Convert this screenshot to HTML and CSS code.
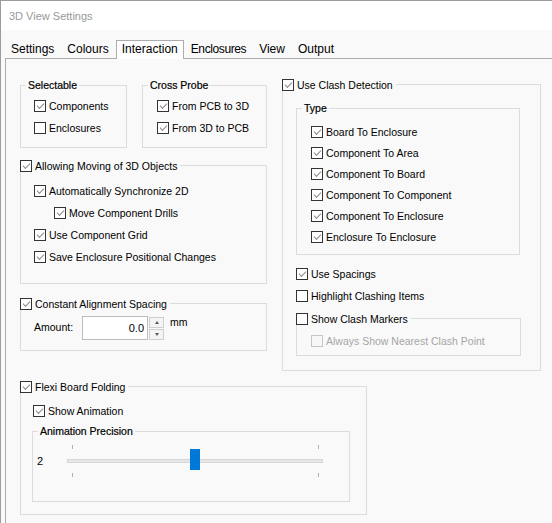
FILE: index.html
```html
<!DOCTYPE html>
<html>
<head>
<meta charset="utf-8">
<link rel="stylesheet" href="styles.css">
</head>
<body>
<div class="window">
  <div class="titlebar"><span class="title">3D View Settings</span></div>
  <div class="tabstrip">
    <div class="tab">Settings</div>
    <div class="tab">Colours</div>
    <div class="tab active">Interaction</div>
    <div class="tab narrow">Enclosures</div>
    <div class="tab">View</div>
    <div class="tab">Output</div>
  </div>
  <div class="panel">
    <div class="columns">
      <div class="col-left">
        <div class="pair">
          <div class="group g-select">
            <div class="legend text">Selectable</div>
            <div class="rows rows-sel">
              <div class="row"><span class="cb on"></span><span>Components</span></div>
              <div class="row"><span class="cb"></span><span>Enclosures</span></div>
            </div>
          </div>
          <div class="group g-probe">
            <div class="legend text">Cross Probe</div>
            <div class="rows rows-sel">
              <div class="row"><span class="cb on"></span><span>From PCB to 3D</span></div>
              <div class="row"><span class="cb on"></span><span>From 3D to PCB</span></div>
            </div>
          </div>
        </div>
        <div class="group g-move">
          <div class="legend check row"><span class="cb on"></span><span>Allowing Moving of 3D Objects</span></div>
          <div class="rows rows-move">
            <div class="row"><span class="cb on"></span><span>Automatically Synchronize 2D</span></div>
            <div class="row indent"><span class="cb on"></span><span>Move Component Drills</span></div>
            <div class="row"><span class="cb on"></span><span>Use Component Grid</span></div>
            <div class="row"><span class="cb on"></span><span>Save Enclosure Positional Changes</span></div>
          </div>
        </div>
        <div class="group g-align">
          <div class="legend check row"><span class="cb on"></span><span>Constant Alignment Spacing</span></div>
          <div class="amount">
            <span class="amount-label">Amount:</span>
            <div class="numbox">0.0</div>
            <div class="spinner">
              <div class="spin-btn"><span class="arrow up"></span></div>
              <div class="spin-btn"><span class="arrow down"></span></div>
            </div>
            <span class="unit">mm</span>
          </div>
        </div>
      </div>
      <div class="col-right">
        <div class="group g-clash">
          <div class="legend check row"><span class="cb on"></span><span>Use Clash Detection</span></div>
          <div class="group g-type">
            <div class="legend text">Type</div>
            <div class="rows rows-type">
              <div class="row"><span class="cb on"></span><span>Board To Enclosure</span></div>
              <div class="row"><span class="cb on"></span><span>Component To Area</span></div>
              <div class="row"><span class="cb on"></span><span>Component To Board</span></div>
              <div class="row"><span class="cb on"></span><span>Component To Component</span></div>
              <div class="row"><span class="cb on"></span><span>Component To Enclosure</span></div>
              <div class="row"><span class="cb on"></span><span>Enclosure To Enclosure</span></div>
            </div>
          </div>
          <div class="row spacings"><span class="cb on"></span><span>Use Spacings</span></div>
          <div class="row highlight"><span class="cb"></span><span>Highlight Clashing Items</span></div>
          <div class="group g-markers">
            <div class="legend check row"><span class="cb"></span><span>Show Clash Markers</span></div>
            <div class="row disabled nearest"><span class="cb"></span><span>Always Show Nearest Clash Point</span></div>
          </div>
        </div>
      </div>
    </div>
    <div class="group g-flexi">
      <div class="legend check row"><span class="cb on"></span><span>Flexi Board Folding</span></div>
      <div class="row anim"><span class="cb on"></span><span>Show Animation</span></div>
      <div class="group g-prec">
        <div class="legend text">Animation Precision</div>
        <div class="slider-row">
          <span class="slider-value">2</span>
          <div class="slider">
            <div class="ticks"><span class="tick"></span><span class="tick"></span></div>
            <div class="track"></div>
            <div class="ticks bottom"><span class="tick"></span><span class="tick"></span></div>
            <div class="thumb"></div>
          </div>
        </div>
      </div>
    </div>
  </div>
</div>
</body>
</html>
```

FILE: styles.css
```css
html, body {
  margin: 0;
  padding: 0;
  background: #f9f9f9;
}
body {
  font-family: "Liberation Sans", Arial, sans-serif;
  color: #000;
}
.window {
  width: 552px;
  height: 523px;
  box-sizing: border-box;
  border-top: 1px solid #9c9c9c;
  border-left: 1px solid #9c9c9c;
  background: #f9f9f9;
  overflow: hidden;
  display: flex;
  flex-direction: column;
}
.titlebar {
  height: 29px;
  flex: none;
  background: #fff;
  display: flex;
  align-items: center;
  padding-left: 8px;
}
.title {
  font-size: 11px;
  color: #999;
  line-height: 13px;
  margin-top: 1px;
}
.tabstrip {
  height: 28px;
  flex: none;
  box-sizing: border-box;
  padding: 10px 0 0 4px;
  display: flex;
  gap: 1px;
  align-items: flex-start;
}
.tab {
  height: 19px;
  box-sizing: border-box;
  border: 1px solid transparent;
  border-bottom: none;
  padding: 0 5px 2px 5px;
  font-size: 12px;
  line-height: 16px;
  white-space: nowrap;
}
.tab.narrow {
  letter-spacing: -0.4px;
}
.tab.active {
  background: #fff;
  border-color: #acacac;
  position: relative;
  z-index: 1;
}
.panel {
  flex: 1;
  margin-left: 4px;
  width: 560px;
  border-top: 1px solid #acacac;
  border-left: 1px solid #acacac;
  background: #f9f9f9;
  padding: 25px 0 0 14px;
  box-sizing: border-box;
}
.columns {
  display: flex;
  gap: 15px;
  align-items: flex-start;
}
.col-left {
  width: 247px;
  padding-top: 1px;
  display: flex;
  flex-direction: column;
}
.col-right {
  width: 259px;
}
.pair {
  display: flex;
  gap: 15px;
}
.group {
  border: 1px solid #dcdcdc;
  box-sizing: border-box;
  padding-left: var(--pl);
  display: flex;
  flex-direction: column;
  align-items: flex-start;
}
.legend {
  background: #f9f9f9;
  height: 12px;
  line-height: 12px;
  font-size: 10.5px;
  white-space: nowrap;
}
.legend.text {
  margin-top: -7px;
  margin-left: calc(5px - var(--pl));
  padding: 0 2px;
  -webkit-text-stroke: 0.2px #000;
}
.legend.check {
  margin-top: -6px;
  margin-left: calc(-1px - var(--pl));
  padding-right: 3px;
}
.row {
  display: flex;
  align-items: center;
  gap: 3px;
  height: 12px;
  font-size: 10.5px;
  line-height: 12px;
  white-space: nowrap;
}
.cb {
  width: 12px;
  height: 12px;
  box-sizing: border-box;
  border: 1px solid #333;
  background: #fff;
  flex: none;
  display: flex;
  align-items: center;
  justify-content: center;
}
.cb.on::after {
  content: "";
  width: 6px;
  height: 3px;
  border-left: 1px solid #8a8a8a;
  border-bottom: 1px solid #8a8a8a;
  transform: translateY(-1px) rotate(-45deg);
}
.row.disabled {
  color: #a6a6a6;
}
.row.disabled .cb {
  border-color: #c6c6c6;
  background: #f7f7f7;
}
.rows {
  display: flex;
  flex-direction: column;
}

/* Selectable / Cross Probe */
.g-select { width: 107px; --pl: 13px; padding-bottom: 13px; }
.g-probe { width: 125px; --pl: 14px; padding-bottom: 13px; }
.rows-sel { margin-top: 9px; gap: 10px; }

/* Allowing moving */
.g-move { margin-top: 17px; --pl: 13px; padding-bottom: 20px; }
.rows-move { margin-top: 13px; gap: 10px; }
.row.indent { margin-left: 20px; }

/* Constant alignment */
.g-align { margin-top: 19px; --pl: 13px; padding-bottom: 10px; }
.amount {
  margin-top: 6px;
  display: flex;
  align-items: flex-start;
  height: 24px;
  font-size: 10.5px;
}
.amount-label {
  width: 48px;
  line-height: 23px;
}
.numbox {
  width: 66px;
  height: 24px;
  box-sizing: border-box;
  border: 1px solid #bdbdbd;
  background: #fff;
  text-align: right;
  padding-right: 3px;
  line-height: 22px;
  font-size: 11px;
}
.spinner {
  margin: 1px 0 0 1px;
  width: 15px;
  display: flex;
  flex-direction: column;
  gap: 1px;
}
.spin-btn {
  height: 11px;
  box-sizing: border-box;
  border: 1px solid #cfcfcf;
  background: #f4f4f4;
  display: flex;
  align-items: center;
  justify-content: center;
}
.arrow {
  width: 0;
  height: 0;
  border-left: 2.5px solid transparent;
  border-right: 2.5px solid transparent;
}
.arrow.up { border-bottom: 3px solid #5a5a5a; }
.arrow.down { border-top: 3px solid #5a5a5a; }
.unit {
  margin-left: 6px;
  line-height: 12px;
}

/* Clash detection */
.g-clash { --pl: 13px; padding-bottom: 14px; }
.g-type { margin-top: 17px; width: 224px; --pl: 14px; padding-bottom: 11px; }
.rows-type { margin-top: 12px; gap: 9px; }
.row.spacings { margin-top: 13px; }
.row.highlight { margin-top: 10px; }
.g-markers { margin-top: 16px; width: 225px; --pl: 14px; padding-bottom: 8px; }
.row.nearest { margin-top: 10px; }

/* Flexi */
.g-flexi { margin-top: 15px; width: 347px; --pl: 12px; padding-bottom: 12px; }
.row.anim { margin-top: 12px; }
.g-prec { margin-top: 14px; margin-left: -1px; width: 318px; --pl: 4px; padding-bottom: 24px; }
.slider-row {
  margin-top: 8px;
  display: flex;
  align-items: center;
  height: 32px;
}
.slider-value {
  width: 30px;
  font-size: 11px;
  line-height: 12px;
}
.slider {
  position: relative;
  width: 256px;
  height: 32px;
  display: flex;
  flex-direction: column;
}
.ticks {
  height: 4px;
  display: flex;
  justify-content: space-between;
  padding: 0 4px 0 5px;
}
.ticks.bottom { margin-top: 10px; }
.tick {
  width: 1px;
  height: 4px;
  background: #b0b0b0;
}
.track {
  margin-top: 10px;
  height: 4px;
  box-sizing: border-box;
  border: 1px solid #d6d6d6;
  background: #e7e7e7;
}
.thumb {
  position: absolute;
  top: 4px;
  left: 123px;
  width: 10px;
  height: 21px;
  background: #0078d7;
}
```
